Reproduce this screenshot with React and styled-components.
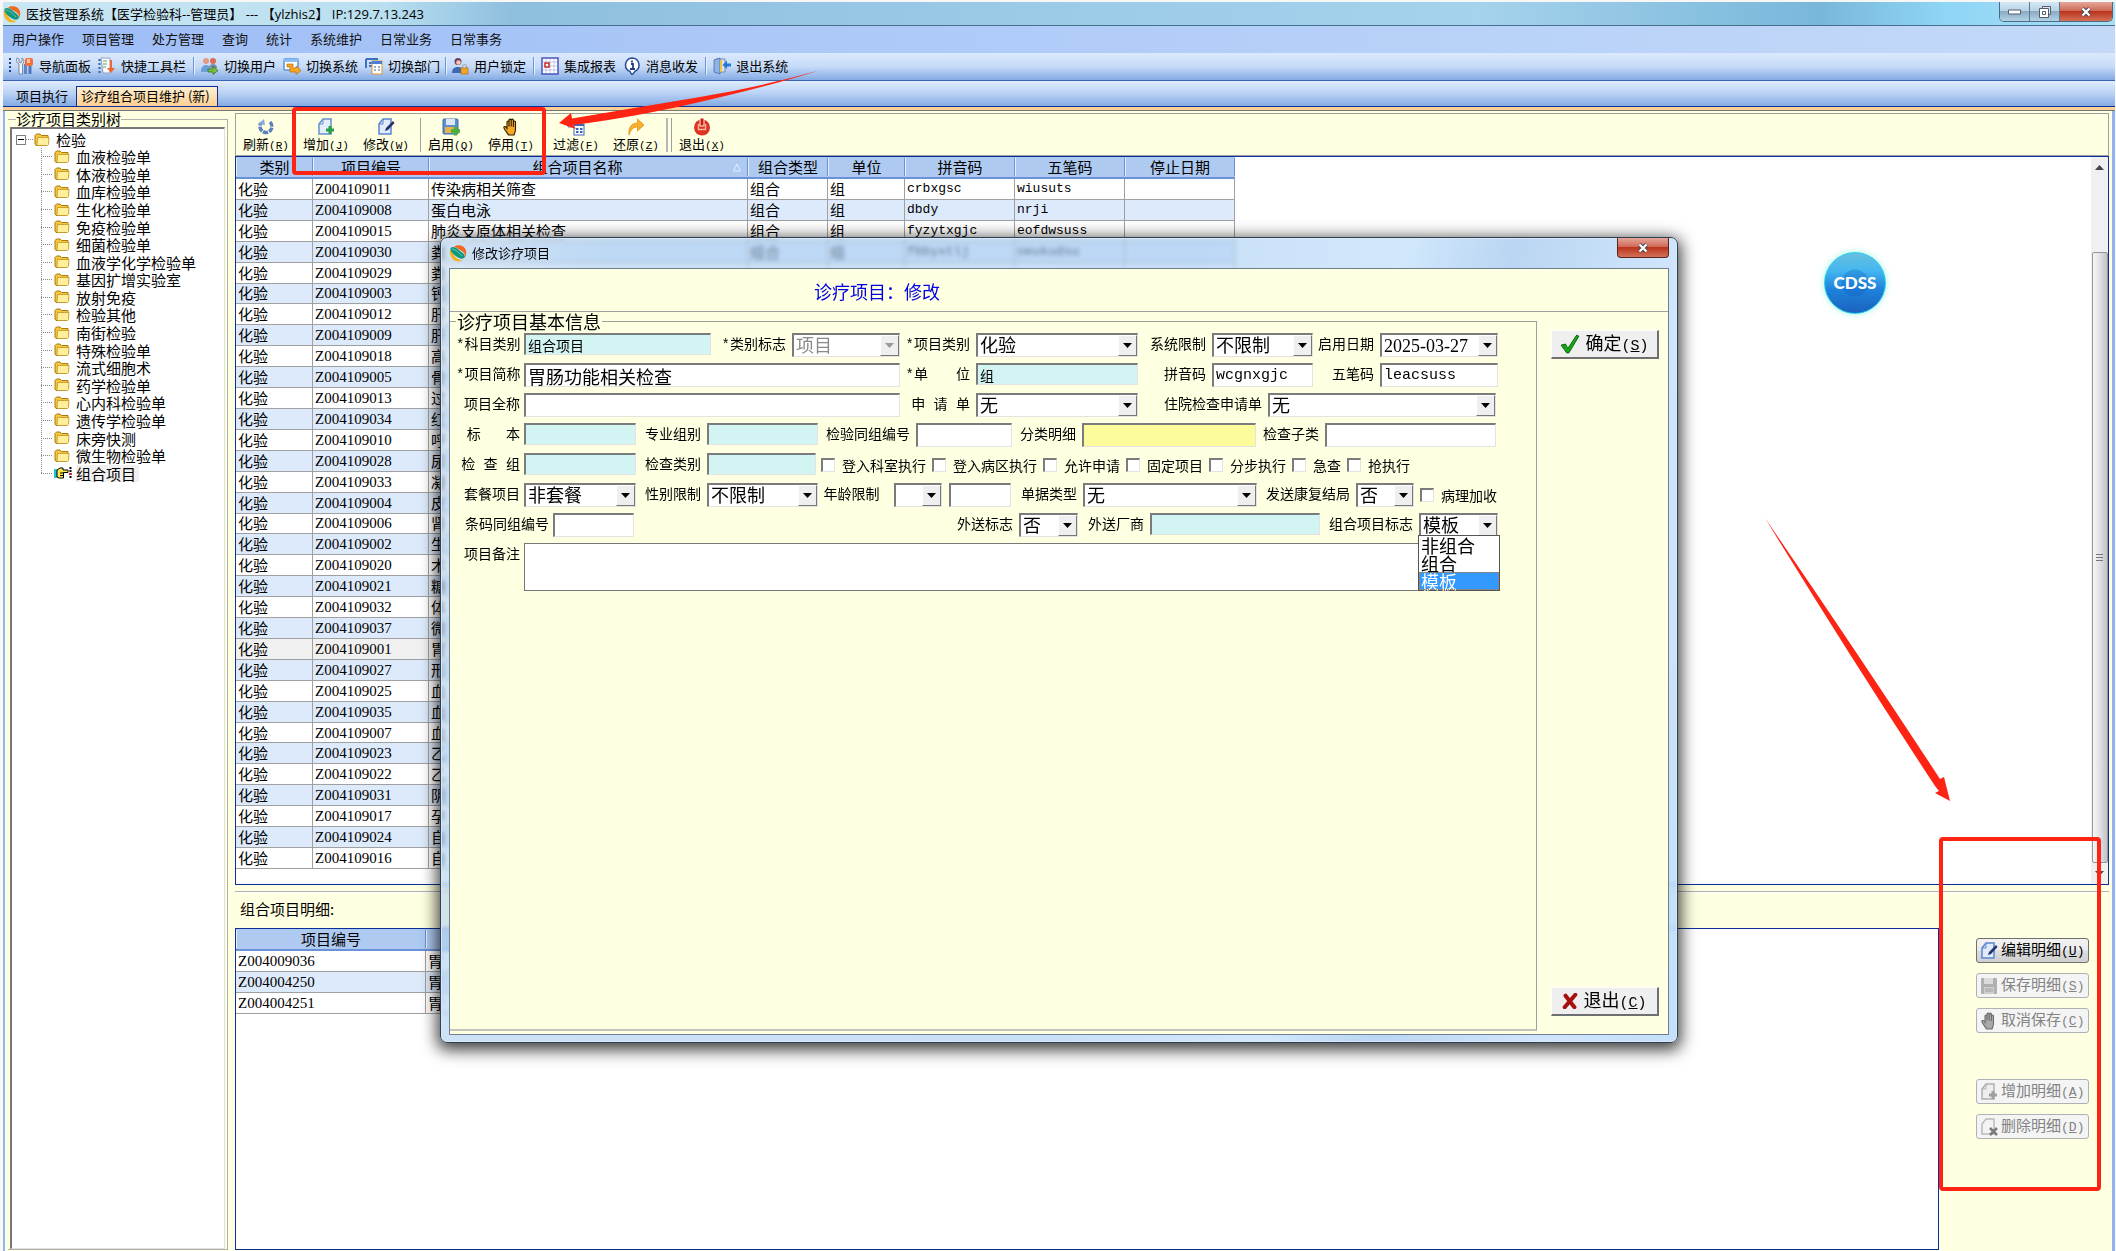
import React from 'react';
import styled, { createGlobalStyle, css } from 'styled-components';

const CJK = '"Noto Sans CJK SC", sans-serif';
const MONO = '"Liberation Mono", "Noto Sans CJK SC", monospace';
const SERIF = '"Liberation Serif", "Noto Sans CJK SC", serif';

const GlobalStyle = createGlobalStyle`
  :root {
    --cream: #ffffe1;
    --navy: #0a2f9b;
    --stripe: #ddeafb;
    --line: #a0a0a0;
    --red: #fe2414;
  }

  * {
    box-sizing: border-box;
  }

  body {
    margin: 0;
    background: #f7f7f7;
    color: #000;
    font: 13px/18px ${CJK};
  }

  button,
  input,
  select,
  textarea {
    font: inherit;
    color: inherit;
    margin: 0;
    border-radius: 0;
  }
`;

/* ---------- data ---------- */

const menus = [
  '用户操作',
  '项目管理',
  '处方管理',
  '查询',
  '统计',
  '系统维护',
  '日常业务',
  '日常事务',
];

const treeItems = [
  '血液检验单',
  '体液检验单',
  '血库检验单',
  '生化检验单',
  '免疫检验单',
  '细菌检验单',
  '血液学化学检验单',
  '基因扩增实验室',
  '放射免疫',
  '检验其他',
  '南街检验',
  '特殊检验单',
  '流式细胞术',
  '药学检验单',
  '心内科检验单',
  '遗传学检验单',
  '床旁快测',
  '微生物检验单',
  '组合项目',
];

const columns = [
  ['类别', 77],
  ['项目编号', 116],
  ['组合项目名称', 319],
  ['组合类型', 80],
  ['单位', 77],
  ['拼音码', 110],
  ['五笔码', 110],
  ['停止日期', 110],
];

const items = [
  ['Z004109011', '传染病相关筛查', 'crbxgsc', 'wiusuts'],
  ['Z004109008', '蛋白电泳', 'dbdy', 'nrji'],
  ['Z004109015', '肺炎支原体相关检查', 'fyzytxgjc', 'eofdwsuss'],
  ['Z004109030', '粪', 'fbbyxtlj', 'oeukudsu'],
  ['Z004109029', '粪'],
  ['Z004109003', '钙'],
  ['Z004109012', '肝'],
  ['Z004109009', '肝'],
  ['Z004109018', '高'],
  ['Z004109005', '骨'],
  ['Z004109013', '过'],
  ['Z004109034', '红'],
  ['Z004109010', '呼'],
  ['Z004109028', '尿'],
  ['Z004109033', '凝'],
  ['Z004109004', '皮'],
  ['Z004109006', '肾'],
  ['Z004109002', '生'],
  ['Z004109020', '术'],
  ['Z004109021', '糖'],
  ['Z004109032', '体'],
  ['Z004109037', '微'],
  ['Z004109001', '胃'],
  ['Z004109027', '形'],
  ['Z004109025', '血'],
  ['Z004109035', '血'],
  ['Z004109007', '血'],
  ['Z004109023', '乙'],
  ['Z004109022', '乙'],
  ['Z004109031', '阴'],
  ['Z004109017', '孕'],
  ['Z004109024', '自'],
  ['Z004109016', '自'],
];

const details = ['Z004009036', 'Z004004250', 'Z004004251'];

/* ---------- icons ---------- */

const Icon = ({ size = 18, children }) => (
  <svg width={size} height={size} viewBox="0 0 18 18" aria-hidden="true">
    {children}
  </svg>
);

const LogoIcon = () => (
  <Icon>
    <path d="M5 2.500C9 0 15.500 1 17 6.500c.6 2.600 0 5-1 6.500.3-3-1-5-4-6.500z" fill="#f26a21" />
    <path d="M1 5c-.8 4 .5 9 4.500 11.500 3 1.500 6 1 8-.5-4 0-6-1.500-8-4z" fill="#f7b21b" />
    <path d="M1.500 4C4 2 7 3.500 10 6s6 4 6 7c-2 3-6 1.500-8.500-.5S1 8 1.500 4z" fill="#12977c" />
    <path d="M3 5c2.500 0 8 4 10 7" stroke="#5fd0b4" fill="none" />
  </Icon>
);

const NavIcon = () => (
  <Icon>
    <path d="M1 1l2 1v3l2 1 1-2V1c2 1 2.500 4 .5 6v10H3V7C.5 6 0 3 1 1z" fill="#f2f5fa" stroke="#5c7496" strokeWidth=".8" />
    <path d="M12.500 9h3v8h-3z" fill="#5077b8" />
    <path d="M8 7h3v10H8z" fill="#5c86c9" />
    <rect x="9" y="1" width="8" height="8" rx="2" fill="#f4703a" />
    <path d="M11 2h3v4h-3z" fill="#ffc4a0" />
  </Icon>
);

const QuickIcon = () => (
  <Icon>
    <path d="M3 1h9v15H5z" fill="#f4f8ff" stroke="#8ca0bf" />
    <path d="M1.500 2v14" stroke="#3b5fa5" strokeWidth="2" strokeDasharray="2 2" />
    <path d="M5 4h4M5 7h4M5 10h3" stroke="#6aa84f" />
    <path d="M12 3h2v8h3l-4 5-4-5h3z" fill="#f2662b" />
  </Icon>
);

const SwitchUserIcon = () => (
  <Icon>
    <circle cx="5" cy="4" r="3" fill="#e59a86" />
    <path d="M0 15c0-5 2-7 5-7s4 2 4 4l-3 3z" fill="#6a9fd8" />
    <circle cx="12" cy="4" r="3" fill="#d96b5a" />
    <path d="M8 11c0-3 2-4 4-4s4 1 4 4z" fill="#7b8fb5" />
    <path d="M7 12h5V9l5 4.500-5 4V15H7z" fill="#7cc242" stroke="#2f6d1c" strokeWidth=".8" />
  </Icon>
);

const SwitchSystemIcon = () => (
  <Icon>
    <rect x="1" y="2" width="14" height="11" rx="1" fill="#fff" stroke="#5b93d8" strokeWidth="1.500" />
    <path d="M1 2h14v3H1z" fill="#8fbcf0" />
    <path d="M4 7h6v4h3V9l5 4.500-5 4V15H7v-5H4z" fill="#f5a623" stroke="#b86a10" strokeWidth=".7" />
  </Icon>
);

const SwitchDeptIcon = () => (
  <Icon>
    <path d="M1 2h12M1 2v9M4 6h4M4 9h3" stroke="#3f6fc4" strokeWidth="2" fill="none" />
    <rect x="7" y="4" width="10" height="13" fill="#fff" stroke="#d99a2e" />
    <path d="M7 4h10v3H7z" fill="#4c7fd1" />
    <path d="M9 10h2M13 10h2M9 13h2M13 13h2" stroke="#7a93bb" strokeWidth="1.500" />
  </Icon>
);

const LockIcon = () => (
  <Icon>
    <circle cx="7" cy="4.500" r="3.500" fill="#6b3f63" />
    <circle cx="7.500" cy="5.500" r="2.300" fill="#f3c9ae" />
    <path d="M1 16c0-4 2-6 6-6s5 2 5 6z" fill="#3d69b0" />
    <path d="M11.500 11V9.500a2 2 0 0 1 4 0V11" fill="none" stroke="#a8a8a8" strokeWidth="1.200" />
    <rect x="10" y="11" width="7" height="6" fill="#f3a52c" stroke="#b36d12" strokeWidth=".7" />
  </Icon>
);

const ReportIcon = () => (
  <Icon>
    <rect x="1" y="1" width="16" height="16" fill="#fff" stroke="#4a53b8" strokeWidth="1.500" />
    <path d="M5 2v14M9 2v14M13 2v14M2 5h14M2 9h14M2 13h14" stroke="#b6b9e3" strokeWidth=".8" />
    <rect x="4" y="6" width="4" height="4" fill="#fff" stroke="#c62828" strokeWidth="1.500" />
  </Icon>
);

const MessageIcon = () => (
  <Icon>
    <path d="M9 1a7 7 0 0 1 3 13.300L9 18l-2-3.500A7 7 0 0 1 9 1z" fill="#fff" stroke="#2c4d94" strokeWidth="1.500" />
    <path d="M8 7h2v5M7 12h5M9 3.500v2" stroke="#1f3f8f" strokeWidth="1.800" fill="none" />
  </Icon>
);

const ExitDoorIcon = () => (
  <Icon>
    <path d="M3 2h9v13H3z" fill="#d6e4f7" stroke="#6c87b3" />
    <path d="M1 3l6-2v16l-6-2z" fill="#8fb3e2" stroke="#4a6da8" strokeWidth=".8" />
    <path d="M7 3h2v12H7z" fill="#f0c040" />
    <path d="M18 6.500h-4v-3L9.500 8l4.500 4V9.500h4z" fill="#2478d4" />
  </Icon>
);

const RefreshIcon = () => (
  <Icon>
    <path d="M13 4a6 6 0 1 1-9 1" fill="none" stroke="#5d80bd" strokeWidth="3.500" strokeDasharray="5 1" />
    <path d="M1 6l6-5 1 6z" fill="#8caad8" />
  </Icon>
);

const pageShape = 'M6 1h8v15H2V6z';

const AddIcon = ({ dim }) => (
  <Icon>
    <path d={pageShape} fill={dim ? '#eee' : '#e3edfb'} stroke={dim ? '#b0b0b0' : '#6b90cf'} strokeWidth="1.500" />
    <path d="M6 1v5H2" fill="none" stroke={dim ? '#b0b0b0' : '#6b90cf'} />
    <path d="M9 12h8M13 8v8" stroke={dim ? '#a0a0a0' : '#23a04a'} strokeWidth="3" />
  </Icon>
);

const EditIcon = () => (
  <Icon>
    <path d={pageShape} fill="#dfeafb" stroke="#5b86cf" strokeWidth="1.500" />
    <path d="M6 1v5H2" fill="none" stroke="#5b86cf" />
    <path d="M8 13l1-3 7-7 1.500 2-6.500 7z" fill="#24306b" />
  </Icon>
);

const DeleteIcon = () => (
  <Icon>
    <path d={pageShape} fill="#f3f3f3" stroke="#bbb" strokeWidth="1.500" />
    <path d="M10 10l7 7M17 10l-7 7" stroke="#7b7b7b" strokeWidth="2.500" />
  </Icon>
);

const EnableIcon = () => (
  <Icon>
    <rect x="1" y="1" width="15" height="15" rx="1" fill="#5f8fd0" stroke="#3e6cab" />
    <path d="M4 1h9v6H4z" fill="#dbe8f8" />
    <path d="M3 9h11v6H3z" fill="#e7b24a" />
    <path d="M9 13h9M13.500 8.500v9" stroke="#4caf3a" strokeWidth="3.500" />
  </Icon>
);

const SaveIcon = () => (
  <Icon>
    <rect x="1" y="1" width="16" height="16" rx="1" fill="#b0b0b0" />
    <path d="M4 1h9v6H4z" fill="#dcdcdc" />
    <path d="M4 10h10v7H4z" fill="#cfcfcf" />
    <path d="M5 12h8M5 14h8" stroke="#a0a0a0" />
  </Icon>
);

const HandIcon = ({ dim }) => (
  <Icon>
    <path
      d="M5 10.500V4a1 1 0 0 1 2 0v4.500V2.200a1 1 0 0 1 2.200 0V8.500 2.200a1 1 0 0 1 2.200 0V9 4a1 1 0 0 1 2.100 0v7c0 3-1 4-1.500 6H6.500C5.500 15 3 12.500 2 10c-.5-1.500 1-2 2-.8z"
      fill={dim ? '#a8a8a8' : '#f9a825'}
      stroke={dim ? '#6c6c6c' : '#2b1a00'}
      strokeWidth="1.100"
    />
  </Icon>
);

const FilterIcon = () => (
  <Icon>
    <path d="M1 3h9v6H1z" fill="#cfe0f7" stroke="#5a7fb8" />
    <rect x="7" y="6" width="10" height="11" fill="#fff" stroke="#3e68b5" />
    <path d="M7 6h10v2H7z" fill="#3e68b5" />
    <path d="M9 11h2.500M13 11h2.500M9 14h2.500M13 14h2.500" stroke="#3e68b5" strokeWidth="2" />
  </Icon>
);

const RestoreIcon = () => (
  <Icon>
    <path d="M2 17C1 9 5 5 10.500 5V1L17 7l-6.500 6V9C7 9 4 11 2 17z" fill="#f8b02c" stroke="#dd8c12" strokeWidth=".7" />
  </Icon>
);

const PowerIcon = () => (
  <Icon>
    <circle cx="9" cy="9.500" r="8" fill="#dd3320" />
    <path d="M5.500 6v5.500h7V6" fill="none" stroke="#f7b3a5" strokeWidth="1.500" />
    <path d="M7 0h4v8H7z" fill="#c9200f" stroke="#fff0e8" strokeWidth="1" />
  </Icon>
);

const FolderIcon = () => (
  <svg width="16" height="14" viewBox="0 0 16 14" aria-hidden="true">
    <path d="M1 4V2.500L2.500 1H6l1.500 1.500H14V11l-1.500 1.500H2L1 11z" fill="#f7c640" stroke="#a87a10" />
    <path d="M3.500 4.500H15l-.5 7-1 1H3z" fill="#ffee9a" stroke="#c39522" strokeWidth=".8" />
  </svg>
);

const PointerIcon = () => (
  <svg width="18" height="14" viewBox="0 0 18 14" aria-hidden="true">
    <path d="M0 3h3v9H0z" fill="#19c5d6" />
    <path d="M3 4l3-2h3v2h5v2.500H9.500V12H5l-2-1z" fill="#ffe84a" stroke="#000" />
    <path d="M6 7h4M6 9.500h4" stroke="#000" />
    <path d="M16.500 1v12" stroke="#000" strokeWidth="2" strokeDasharray="2 1" />
    <path d="M15.500 7h2v2h-2z" fill="#f00" />
  </svg>
);

const CheckIcon = () => (
  <Icon size={20}>
    <path d="M1 10l4-1 2 4L15 1l2 1L8 17H6z" fill="#11a813" stroke="#0a5a0c" strokeWidth=".8" />
  </Icon>
);

const CrossIcon = () => (
  <Icon size={16}>
    <path d="M4 3l10 13M15 2L3 16" stroke="#a80f0f" strokeWidth="4.500" strokeLinecap="round" />
  </Icon>
);

const ArrowDown = ({ color = '#000' }) => (
  <svg width="9" height="5" viewBox="0 0 9 5" aria-hidden="true">
    <path d="M0 0h9L4.500 5z" fill={color} />
  </svg>
);

const ArrowUp = () => (
  <svg width="9" height="5" viewBox="0 0 9 5" aria-hidden="true">
    <path d="M0 5h9L4.500 0z" fill="#444" />
  </svg>
);

/* ---------- main window ---------- */

const Window = styled.div`
  position: relative;
  display: flex;
  flex-direction: column;
  min-height: 100vh;
  padding: 2px 1px 0 3px;
  overflow: hidden;
`;

const TitleBar = styled.header`
  display: flex;
  justify-content: space-between;
  height: 24px;
  border-bottom: 1px solid #47708f;
  background: linear-gradient(
    to right,
    #cbe6f2 0,
    #b9dff0 18%,
    #8fbfdf 24%,
    #9ccbe8 50%,
    #a5d2ec 70%,
    #79b7da 86%,
    #8fd5f5 92%,
    #a9e0f8 100%
  );
`;

const TitleText = styled.h1`
  display: flex;
  align-items: center;
  gap: 5px;
  margin: 0;
  font: 400 13px/22px "Open Sans", ${CJK};
  white-space: pre;
`;

const Controls = styled.div`
  display: flex;
  height: 20px;
  margin-right: 2px;
  border: 1px solid #4d6a80;
  border-top: 0;
  border-radius: 0 0 5px 5px;
  overflow: hidden;
`;

const ControlButton = styled.button`
  display: flex;
  align-items: center;
  justify-content: center;
  width: ${p => (p.$close ? 52 : 30)}px;
  padding: 0;
  border: 0;
  border-right: ${p => (p.$close ? 0 : '1px solid #5b7890')};
  background: ${p =>
    p.$close
      ? 'linear-gradient(#e5a79a, #cf6a58 45%, #bb3319 50%, #d4725a)'
      : 'linear-gradient(#d3e8f4, #b7d3e5 45%, #8caac2 50%, #b2d3e6)'};
`;

const MenuBar = styled.nav`
  display: flex;
  align-items: center;
  gap: 18px;
  height: 27px;
  padding: 0 9px 2px;
  background: linear-gradient(to right, #9ebdf6, #b4cff8 60%, #c4d9f8);
`;

const MenuLink = styled.a`
  color: #111;
  text-decoration: none;
`;

const ToolStrip = styled.div`
  display: flex;
  align-items: center;
  gap: 7px;
  height: 28px;
  padding: 0 6px 2px;
  border-bottom: 1px solid #3b62b3;
  background: linear-gradient(#dbe9fd, #c6dbf8 50%, #84abe4);
`;

const Grip = styled.i`
  width: 2px;
  height: 16px;
  margin-right: -2px;
  background: repeating-linear-gradient(#27418c 0 2px, transparent 2px 4px);
`;

const StripButton = styled.button`
  display: flex;
  align-items: center;
  gap: 5px;
  padding: 0;
  border: 0;
  background: none;
  white-space: nowrap;
`;

const StripLine = styled.i`
  width: 1px;
  height: 18px;
  margin: 0 ${p => (p.$tight ? -2 : 0)}px;
  background: #6f95d2;
  box-shadow: 1px 0 #e8f1fd;
`;

const Tabs = styled.div`
  display: flex;
  align-items: flex-end;
  height: 26px;
  padding: 0 2px;
  border-bottom: 1px solid var(--navy);
  background: linear-gradient(#dfecfd, #b9d1f4 50%, #84abe4);
`;

const Tab = styled.button`
  height: 20px;
  padding: ${p => (p.$active ? '0 7px 1px 4px' : '0 8px 1px 11px')};
  border: 0;
  background: none;
  white-space: nowrap;

  ${p =>
    p.$active &&
    css`
      border: 1px solid var(--navy);
      border-bottom: 0;
      background: linear-gradient(#fff0d0, #fdcf92);
    `}
`;

const TabEdge = styled.div`
  height: 4px;
  border-bottom: 1px solid #777;
  background: #fbcf95;
`;

const Body = styled.div`
  display: flex;
  flex: 1;
  gap: 7px;
  padding: 0 3px 1px 3px;
  border-left: 2px solid #8fb4ef;
  border-right: 3px solid #8fb4ef;
  background: var(--cream);
`;

/* ---------- category tree ---------- */

const TreeGroup = styled.fieldset`
  display: flex;
  flex-direction: column;
  width: 220px;
  min-width: 0;
  margin: 0;
  padding: 0 2px 0;
  border: 1px solid #b0b0b0;
  border-left: 0;
`;

const TreeLegend = styled.legend`
  margin-left: 6px;
  padding: 0;
  font-size: 15px;
  line-height: 16px;
`;

const TreeBox = styled.div`
  height: 100%;
  min-height: 1120px;
  padding: 2px 4px;
  border: 1px solid #e0e0e0;
  border-top: 2px solid #777;
  border-left: 2px solid #777;
  background: #fff;
  font-size: 15px;
  line-height: 17px;
`;

const TreeRoot = styled.div`
  display: flex;
  align-items: center;
  height: 17px;
`;

const Toggle = styled.button`
  display: flex;
  align-items: center;
  justify-content: center;
  width: 10px;
  height: 10px;
  padding: 0;
  border: 1px solid #808080;
  background: #fff;

  &::before {
    content: '';
    width: 6px;
    height: 1px;
    background: #000;
  }
`;

const Dots = styled.i`
  width: ${p => p.$w}px;
  height: 1px;
  margin-right: 1px;
  background: repeating-linear-gradient(to right, #888 0 1px, transparent 1px 2px);
`;

const RootText = styled.span`
  margin-left: 6px;
`;

const TreeList = styled.ul`
  display: flex;
  flex-direction: column;
  height: 334px;
  margin: 0 0 0 25px;
  padding: 0;
  list-style: none;
  background: repeating-linear-gradient(#888 0 1px, transparent 1px 2px) 0 0 / 1px 326px no-repeat;
`;

const TreeItem = styled.li`
  display: flex;
  flex: 1;
  align-items: center;
`;

const TreeText = styled.span`
  margin-left: ${p => (p.$active ? 4 : 6)}px;
  padding-right: 3px;
  background: ${p => (p.$active ? '#f0f0f0' : 'none')};
`;

/* ---------- work area ---------- */

const Work = styled.main`
  display: flex;
  flex: 1;
  flex-direction: column;
  min-width: 0;
  padding-top: 2px;
`;

const Actions = styled.div`
  display: flex;
  align-items: center;
  height: 43px;
  border: 1px solid var(--line);
  background: var(--cream);
`;

const Action = styled.button`
  display: flex;
  flex-direction: column;
  align-items: center;
  width: 60px;
  padding: 3px 0 0;
  border: 0;
  background: none;
  line-height: 15px;
  white-space: nowrap;
`;

const ActionLine = styled.i`
  width: ${p => (p.$double ? 6 : 5)}px;
  height: 34px;
  border-right: 1px solid var(--line);
  border-left: ${p => (p.$double ? '2px solid #b8b8b8' : 0)};
`;

const HotKey = styled.span`
  font-family: ${MONO};
  font-size: ${p => p.$size || 11}px;
`;

const GridFrame = styled.section`
  display: flex;
  justify-content: space-between;
  flex: ${p => (p.$grow ? 1 : 'none')};
  min-width: 0;
  padding-bottom: ${p => (p.$grow ? 0 : 15)}px;
  border: 1px solid var(--navy);
  background: #fff;
`;

const Grid = styled.table`
  width: ${p => p.$width}px;
  height: ${p => p.$height}px;
  table-layout: fixed;
  border-collapse: separate;
  border-spacing: 0;
  font-size: 15px;
  line-height: 18px;
  white-space: nowrap;

  th {
    position: relative;
    height: 22px;
    padding: 0;
    border-bottom: 2px solid #6a92d8;
    background:
      linear-gradient(#6a92d8, #6a92d8) 100% 50% / 1px 18px no-repeat,
      linear-gradient(#e6f0fd, #e6f0fd) 0 50% / 1px 18px no-repeat,
      #aecaf1;
    font-weight: 400;
  }

  td {
    padding: 0 2px;
    overflow: hidden;
    border-right: 1px solid var(--line);
    border-bottom: 1px solid var(--line);
  }

  tbody tr:nth-child(even) {
    background: var(--stripe);
  }

  tbody tr[aria-selected='true'] {
    background: #f0f0f0;
  }
`;

const HeadText = styled.span`
  padding-right: ${p => (p.$sorted ? 22 : 0)}px;
`;

const Code = styled.td`
  font-family: ${SERIF};
`;

const Pinyin = styled.td`
  font-family: ${MONO};
  font-size: 13px;
`;

const SortMark = styled.svg`
  position: absolute;
  right: 7px;
  top: 6px;
`;

const ScrollTrack = styled.div`
  display: flex;
  flex-direction: column;
  align-items: center;
  width: 17px;
  margin-bottom: -15px;
  padding: 8px 0;
  background: #f0f0f0;
`;

const ScrollThumb = styled.div`
  display: flex;
  align-items: center;
  justify-content: center;
  flex: 1;
  width: 16px;
  margin: 82px 0 8px;
  border: 1px solid #979797;
  border-radius: 2px;
  background: linear-gradient(to right, #f6f6f6, #e3e3e4 45%, #c3c4c8);

  &::before {
    content: '';
    width: 7px;
    height: 8px;
    background: repeating-linear-gradient(#777 0 1px, transparent 1px 3px);
  }
`;

const DetailTitle = styled.h2`
  height: 37px;
  margin: 6px 0 0;
  padding-left: 5px;
  border-top: 1px solid #b0b0b0;
  box-shadow: inset 0 1px #fff;
  font-size: 15px;
  font-weight: 400;
  line-height: 33px;
`;

const DetailRow = styled.div`
  display: flex;
  flex: 1;
`;

const DetailActions = styled.div`
  display: flex;
  flex-direction: column;
  align-items: flex-end;
  gap: 10px;
  width: 170px;
  padding: 10px 20px 0 0;
`;

const DetailButton = styled.button`
  display: flex;
  align-items: center;
  gap: 3px;
  width: 113px;
  height: 25px;
  margin-top: ${p => (p.$apart ? 36 : 0)}px;
  padding: 0 3px;
  border: 1px solid #707070;
  border-radius: 3px;
  background: linear-gradient(#f2f2f2, #ebebeb 48%, #dddddd 52%, #cfcfcf);
  font-size: 15px;
  white-space: nowrap;

  &:disabled {
    border-color: #adb2b5;
    background: #f4f4f4;
    color: #838383;
  }
`;

const Cdss = styled.button`
  position: absolute;
  top: 252px;
  right: 230px;
  width: 62px;
  height: 62px;
  padding: 0;
  border: 1px solid #22d3ea;
  border-radius: 50%;
  background:
    radial-gradient(circle, rgba(10, 90, 190, 0.3) 0 13px, transparent 14px),
    linear-gradient(#68bfe0, #43b6f0 30%, #1e83dc 60%, #1b62bd);
  box-shadow: 0 0 7px #a5f5e6;
  color: #fff;
  font: 900 17px/60px Lato, sans-serif;
`;

/* ---------- edit dialog ---------- */

const DialogLayer = styled.div`
  position: absolute;
  inset: 237px 0 auto;
  display: flex;
  justify-content: center;
  padding-left: 2px;
`;

const Dialog = styled.div`
  width: 1238px;
  padding: 0 8px 7px;
  border: 1px solid #2f3f4f;
  border-radius: 7px;
  background: linear-gradient(100deg, #c8dcef99, #a9cdf099 12%, #a4cbf299 55%, #b3d8fa99 70%, #9cc4ecb3 78%, #c5dffacc 90%, #b4d7f8cc);
  box-shadow: inset 0 0 0 1px #d8eafa, 0 4px 16px 3px rgba(0, 0, 0, 0.75);
  backdrop-filter: blur(2px);
`;

const DialogTitle = styled.div`
  display: flex;
  justify-content: space-between;
  height: 30px;
`;

const DialogClose = styled(ControlButton)`
  height: 20px;
  border: 1px solid #5b2320;
  border-top: 0;
  border-radius: 0 0 4px 4px;
`;

const DialogBody = styled.form`
  border: 1px solid #6d7f91;
  background: var(--cream);
`;

const DialogHeading = styled.h2`
  height: 43px;
  margin: 0;
  padding-left: 364px;
  border-bottom: 1px solid var(--line);
  color: #0000e6;
  font-size: 18px;
  font-weight: 400;
  line-height: 45px;
`;

const DialogColumns = styled.div`
  display: flex;
  min-height: 722px;
`;

const BaseInfo = styled.fieldset`
  display: flex;
  flex: 1;
  flex-direction: column;
  gap: 6px;
  min-width: 0;
  margin: 0 0 3px;
  padding: 3px 6px 0;
  border: 1px solid var(--line);
  border-left: 0;
  border-bottom: 2px solid #c4c4bc;
`;

const BaseLegend = styled.legend`
  padding: 0 1px;
  font-size: 18px;
  line-height: 18px;
`;

const FormRow = styled.div`
  display: flex;
  width: 1042px;
  min-height: 24px;
`;

const Caption = styled.span`
  flex: none;
  width: ${p => p.$w}px;
  padding-right: 6px;
  font: 14px/24px ${MONO};
  text-align: right;
  white-space: pre;
`;

const Field = styled.label`
  position: relative;
  display: flex;
  flex: none;
  align-items: flex-start;
  width: ${p => p.$w}px;
  margin-left: ${p => (p.$end ? 'auto' : 0)};

  &:first-child ${Caption} {
    padding-right: 4px;
  }
`;

const sunken = css`
  border: 1px solid;
  border-width: 2px 1px 1px 2px;
  border-color: #7b7b7b #e3e3e3 #e3e3e3 #7b7b7b;
`;

const tones = { cyan: '#d2f4f2', yellow: '#fcfc9c', white: '#fff' };

const TextBox = styled.input`
  ${sunken}
  flex: 1;
  min-width: 0;
  height: ${p => (p.$tone === 'cyan' ? 22 : 24)}px;
  padding: 0 2px;
  background: ${p => tones[p.$tone || 'white']};
  font: ${p => p.$size || 18}px/18px ${MONO};
`;

const Remark = styled.textarea`
  flex: 1;
  height: 48px;
  border: 1px solid #777;
  background: #fff;
  resize: none;
`;

const ComboBox = styled.span`
  ${sunken}
  display: flex;
  flex: 1;
  min-width: 0;
  height: 24px;
  background: #fff;
  color: ${p => (p.$disabled ? '#8a8a8a' : '#000')};

  select,
  input {
    flex: 1;
    min-width: 0;
    padding: 0 2px;
    border: 0;
    background: none;
    appearance: none;
    font: 18px/20px ${SERIF};
    opacity: 1;
  }
`;

const ComboArrow = styled.span`
  display: flex;
  align-items: center;
  justify-content: center;
  width: 19px;
  border: 1px solid;
  border-color: #fff #777 #777 #fff;
  background: #efefef;
`;

const OptionList = styled.ul`
  position: absolute;
  top: 22px;
  right: -2px;
  width: 82px;
  z-index: 1;
  margin: 0;
  padding: 0;
  border: 1px solid #555;
  background: #fff;
  list-style: none;
  font-size: 18px;
  line-height: 18px;
`;

const Option = styled.li`
  height: 18px;
  padding-left: 2px;
  outline: ${p => (p.$active ? '1px dotted #c87a2c' : 'none')};
  outline-offset: -1px;
  background: ${p => (p.$active ? '#3399ff' : 'none')};
  color: ${p => (p.$active ? '#fff' : '#000')};
`;

const CheckField = styled.label`
  display: flex;
  align-items: center;
  gap: 7px;
  margin-left: ${p => (p.$first ? 5 : 6)}px;
  font-size: 14px;

  input {
    ${sunken}
    width: 14px;
    height: 14px;
    background: #fff;
    appearance: none;
  }
`;

const Spacer = styled.i`
  width: 7px;
`;

const DialogSide = styled.div`
  display: flex;
  flex-direction: column;
  justify-content: space-between;
  padding: 18px 9px 18px 14px;
`;

const DialogButton = styled.button`
  display: flex;
  align-items: center;
  justify-content: center;
  gap: 5px;
  width: 108px;
  height: 29px;
  padding: 0;
  border: 1px solid;
  border-width: 1px 2px 2px 1px;
  border-color: #fff #6f6f6f #6f6f6f #fff;
  background: #efefef;
  font-size: 18px;
`;

/* ---------- red marks ---------- */

const MarkBox = styled.div`
  position: absolute;
  border: 4px solid var(--red);
  border-radius: 4px;
  pointer-events: none;
`;

const ToolbarMark = styled(MarkBox)`
  top: 107px;
  left: 292px;
  width: 254px;
  height: 68px;
`;

const DetailMark = styled(MarkBox)`
  top: 837px;
  right: 15px;
  width: 162px;
  height: 354px;
`;

const MarkArrow = styled.svg`
  position: absolute;
  top: ${p => p.$top}px;
  left: ${p => (p.$left ? `${p.$left}px` : 'auto')};
  right: ${p => (p.$right ? `${p.$right}px` : 'auto')};
  fill: var(--red);
  pointer-events: none;
`;

const Combo = ({ options, disabled }) => (
  <ComboBox $disabled={disabled}>
    <select disabled={disabled} defaultValue={options[0]}>
      {options.map(o => (
        <option key={o}>{o}</option>
      ))}
    </select>
    <ComboArrow>
      <ArrowDown color={disabled ? '#999' : '#000'} />
    </ComboArrow>
  </ComboBox>
);

const Check = ({ text, first }) => (
  <CheckField $first={first}>
    <input type="checkbox" />
    {text}
  </CheckField>
);

const Key = ({ k, size }) => (
  <HotKey $size={size}>
    (<u>{k}</u>)
  </HotKey>
);

const CloseGlyph = () => (
  <svg width="12" height="10" viewBox="0 0 12 10" aria-hidden="true">
    <path d="M2.500 1.500l7 7M9.500 1.500l-7 7" stroke="#444a5a" strokeWidth="4" />
    <path d="M2.500 1.500l7 7M9.500 1.500l-7 7" stroke="#fff" strokeWidth="2.200" />
  </svg>
);

function EditDialog() {
  return (
    <DialogLayer>
      <Dialog role="dialog" aria-label="修改诊疗项目">
        <DialogTitle>
          <TitleText as="div">
            <LogoIcon />
            修改诊疗项目
          </TitleText>
          <DialogClose type="button" $close aria-label="关闭">
            <CloseGlyph />
          </DialogClose>
        </DialogTitle>
        <DialogBody>
          <DialogHeading>诊疗项目：修改</DialogHeading>
          <DialogColumns>
            <BaseInfo>
              <BaseLegend>诊疗项目基本信息</BaseLegend>
              <FormRow>
                <Field $w={255}>
                  <Caption $w={68}>*科目类别</Caption>
                  <TextBox $tone="cyan" $size={14} defaultValue="组合项目" />
                </Field>
                <Field $w={189}>
                  <Caption $w={81}>*类别标志</Caption>
                  <Combo options={['项目']} disabled />
                </Field>
                <Field $w={238}>
                  <Caption $w={76}>*项目类别</Caption>
                  <Combo options={['化验']} />
                </Field>
                <Field $w={175}>
                  <Caption $w={74}>系统限制</Caption>
                  <Combo options={['不限制']} />
                </Field>
                <Field $w={185}>
                  <Caption $w={67}>启用日期</Caption>
                  <ComboBox>
                    <input defaultValue="2025-03-27" />
                    <ComboArrow>
                      <ArrowDown />
                    </ComboArrow>
                  </ComboBox>
                </Field>
              </FormRow>
              <FormRow>
                <Field $w={444}>
                  <Caption $w={68}>*项目简称</Caption>
                  <TextBox defaultValue="胃肠功能相关检查" />
                </Field>
                <Field $w={238}>
                  <Caption $w={76}>*单　　位</Caption>
                  <TextBox $tone="cyan" $size={14} defaultValue="组" />
                </Field>
                <Field $w={175}>
                  <Caption $w={74}>拼音码</Caption>
                  <TextBox $size={15} defaultValue="wcgnxgjc" />
                </Field>
                <Field $w={185}>
                  <Caption $w={67}>五笔码</Caption>
                  <TextBox $size={15} defaultValue="leacsuss" />
                </Field>
              </FormRow>
              <FormRow>
                <Field $w={444}>
                  <Caption $w={68}>项目全称</Caption>
                  <TextBox />
                </Field>
                <Field $w={238}>
                  <Caption $w={76}>申 请 单</Caption>
                  <Combo options={['无']} />
                </Field>
                <Field $w={358}>
                  <Caption $w={130}>住院检查申请单</Caption>
                  <Combo options={['无']} />
                </Field>
              </FormRow>
              <FormRow>
                <Field $w={180}>
                  <Caption $w={68}>标   本</Caption>
                  <TextBox $tone="cyan" />
                </Field>
                <Field $w={182}>
                  <Caption $w={71}>专业组别</Caption>
                  <TextBox $tone="cyan" />
                </Field>
                <Field $w={194}>
                  <Caption $w={98}>检验同组编号</Caption>
                  <TextBox />
                </Field>
                <Field $w={244}>
                  <Caption $w={70}>分类明细</Caption>
                  <TextBox $tone="yellow" />
                </Field>
                <Field $w={240}>
                  <Caption $w={69}>检查子类</Caption>
                  <TextBox />
                </Field>
              </FormRow>
              <FormRow>
                <Field $w={180}>
                  <Caption $w={68}>检 查 组</Caption>
                  <TextBox $tone="cyan" />
                </Field>
                <Field $w={180}>
                  <Caption $w={71}>检查类别</Caption>
                  <TextBox $tone="cyan" />
                </Field>
                <Check first text="登入科室执行" />
                <Check text="登入病区执行" />
                <Check text="允许申请" />
                <Check text="固定项目" />
                <Check text="分步执行" />
                <Check text="急查" />
                <Check text="抢执行" />
              </FormRow>
              <FormRow>
                <Field $w={180}>
                  <Caption $w={68}>套餐项目</Caption>
                  <Combo options={['非套餐']} />
                </Field>
                <Field $w={182}>
                  <Caption $w={71}>性别限制</Caption>
                  <Combo options={['不限制']} />
                </Field>
                <Field $w={124}>
                  <Caption $w={76}>年龄限制 </Caption>
                  <Combo options={['']} />
                </Field>
                <Spacer />
                <Field $w={62}>
                  <TextBox aria-label="年龄" />
                </Field>
                <Field $w={246}>
                  <Caption $w={72}>单据类型</Caption>
                  <Combo options={['无']} />
                </Field>
                <Field $w={157}>
                  <Caption $w={99}>发送康复结局</Caption>
                  <Combo options={['否']} />
                </Field>
                <Check text="病理加收" />
              </FormRow>
              <FormRow>
                <Field $w={178}>
                  <Caption $w={97}>条码同组编号</Caption>
                  <TextBox />
                </Field>
                <Field $w={123} $end>
                  <Caption $w={64}>外送标志</Caption>
                  <Combo options={['否']} />
                </Field>
                <Field $w={242}>
                  <Caption $w={72}>外送厂商</Caption>
                  <TextBox $tone="cyan" />
                </Field>
                <Field $w={178}>
                  <Caption $w={99}>组合项目标志</Caption>
                  <Combo options={['模板', '组合', '非组合']} />
                  <OptionList>
                    <Option>非组合</Option>
                    <Option>组合</Option>
                    <Option $active>模板</Option>
                  </OptionList>
                </Field>
              </FormRow>
              <FormRow>
                <Field $w={1042}>
                  <Caption $w={68}>项目备注</Caption>
                  <Remark />
                </Field>
              </FormRow>
            </BaseInfo>
            <DialogSide>
              <DialogButton type="button">
                <CheckIcon />
                <span>
                  确定
                  <Key k="S" size={15} />
                </span>
              </DialogButton>
              <DialogButton type="button">
                <CrossIcon />
                <span>
                  退出
                  <Key k="C" size={15} />
                </span>
              </DialogButton>
            </DialogSide>
          </DialogColumns>
        </DialogBody>
      </Dialog>
    </DialogLayer>
  );
}

function ItemGrid() {
  return (
    <GridFrame>
      <Grid $width={999} $height={712}>
        <colgroup>
          {columns.map(([name, width]) => (
            <col key={name} width={width} />
          ))}
        </colgroup>
        <thead>
          <tr>
            {columns.map(([name]) => {
              const sorted = name === '组合项目名称';
              return (
                <th key={name}>
                  <HeadText $sorted={sorted}>{name}</HeadText>
                  {sorted && (
                    <SortMark width="8" height="9" viewBox="0 0 8 9">
                      <path d="M4 1L7.500 8h-7z" fill="none" stroke="#e2edfc" />
                    </SortMark>
                  )}
                </th>
              );
            })}
          </tr>
        </thead>
        <tbody>
          {items.map(([code, name, py, wb]) => (
            <tr key={code} aria-selected={code === 'Z004109001'}>
              <td>化验</td>
              <Code>{code}</Code>
              <td>{name}</td>
              <td>{py && '组合'}</td>
              <td>{py && '组'}</td>
              <Pinyin>{py}</Pinyin>
              <Pinyin>{wb}</Pinyin>
              <td />
            </tr>
          ))}
        </tbody>
      </Grid>
      <ScrollTrack>
        <ArrowUp />
        <ScrollThumb />
        <ArrowDown color="#444" />
      </ScrollTrack>
    </GridFrame>
  );
}

function DetailGrid() {
  return (
    <GridFrame $grow>
      <Grid $width={800} $height={85}>
        <colgroup>
          <col width={190} />
          <col />
        </colgroup>
        <thead>
          <tr>
            <th>项目编号</th>
            <th />
          </tr>
        </thead>
        <tbody>
          {details.map(code => (
            <tr key={code}>
              <Code>{code}</Code>
              <td>胃</td>
            </tr>
          ))}
        </tbody>
      </Grid>
    </GridFrame>
  );
}

function CategoryTree() {
  return (
    <TreeGroup>
      <TreeLegend>诊疗项目类别树</TreeLegend>
      <TreeBox>
        <TreeRoot>
          <Toggle aria-label="折叠" />
          <Dots $w={7} />
          <FolderIcon />
          <RootText>检验</RootText>
        </TreeRoot>
        <TreeList>
          {treeItems.map(name => {
            const active = name === '组合项目';
            return (
              <TreeItem key={name}>
                <Dots $w={12} />
                {active ? <PointerIcon /> : <FolderIcon />}
                <TreeText $active={active}>{name}</TreeText>
              </TreeItem>
            );
          })}
        </TreeList>
      </TreeBox>
    </TreeGroup>
  );
}

const ActionItem = ({ icon, text, k }) => (
  <Action>
    {icon}
    <span>
      {text}
      <Key k={k} />
    </span>
  </Action>
);

const DetailAction = ({ icon, text, k, ...rest }) => (
  <DetailButton {...rest}>
    {icon}
    <span>
      {text}
      <Key k={k} size={13} />
    </span>
  </DetailButton>
);

const StripItem = ({ icon, text }) => (
  <StripButton>
    {icon}
    {text}
  </StripButton>
);

function App() {
  return (
    <Window>
      <GlobalStyle />
      <TitleBar>
        <TitleText>
          <LogoIcon />
          {'医技管理系统【医学检验科--管理员】 --- 【ylzhis2】 IP:129.7.13.243'}
        </TitleText>
        <Controls>
          <ControlButton aria-label="最小化">
            <svg width="13" height="6" viewBox="0 0 13 6">
              <path d="M.5 1h12v4H.5z" fill="#fff" stroke="#555c6b" />
            </svg>
          </ControlButton>
          <ControlButton aria-label="还原">
            <svg width="14" height="14" viewBox="0 0 14 14">
              <path d="M4.500 1.500h8v8h-8z" fill="#dfe8ef" stroke="#555c6b" />
              <path d="M1.500 3.500h9v9h-9z" fill="#fff" stroke="#555c6b" />
              <path d="M4.500 6.500h3v3h-3z" fill="#fff" stroke="#555c6b" />
            </svg>
          </ControlButton>
          <ControlButton $close aria-label="关闭">
            <CloseGlyph />
          </ControlButton>
        </Controls>
      </TitleBar>
      <MenuBar>
        {menus.map(m => (
          <MenuLink key={m} href="#menu">
            {m}
          </MenuLink>
        ))}
      </MenuBar>
      <ToolStrip>
        <Grip />
        <StripItem icon={<NavIcon />} text="导航面板" />
        <StripItem icon={<QuickIcon />} text="快捷工具栏" />
        <StripLine />
        <StripItem icon={<SwitchUserIcon />} text="切换用户" />
        <StripItem icon={<SwitchSystemIcon />} text="切换系统" />
        <StripItem icon={<SwitchDeptIcon />} text="切换部门" />
        <StripLine $tight />
        <StripItem icon={<LockIcon />} text="用户锁定" />
        <StripLine />
        <StripItem icon={<ReportIcon />} text="集成报表" />
        <StripItem icon={<MessageIcon />} text="消息收发" />
        <StripLine />
        <StripItem icon={<ExitDoorIcon />} text="退出系统" />
      </ToolStrip>
      <Tabs>
        <Tab>项目执行</Tab>
        <Tab $active>诊疗组合项目维护 (新)</Tab>
      </Tabs>
      <TabEdge />
      <Body>
        <CategoryTree />
        <Work>
          <Actions>
            <ActionItem icon={<RefreshIcon />} text="刷新" k="R" />
            <ActionItem icon={<AddIcon />} text="增加" k="J" />
            <ActionItem icon={<EditIcon />} text="修改" k="W" />
            <ActionLine />
            <ActionItem icon={<EnableIcon />} text="启用" k="Q" />
            <ActionItem icon={<HandIcon />} text="停用" k="T" />
            <ActionLine />
            <ActionItem icon={<FilterIcon />} text="过滤" k="F" />
            <ActionItem icon={<RestoreIcon />} text="还原" k="Z" />
            <ActionLine $double />
            <ActionItem icon={<PowerIcon />} text="退出" k="X" />
          </Actions>
          <ItemGrid />
          <DetailTitle>组合项目明细:</DetailTitle>
          <DetailRow>
            <DetailGrid />
            <DetailActions>
              <DetailAction icon={<EditIcon />} text="编辑明细" k="U" />
              <DetailAction disabled icon={<SaveIcon />} text="保存明细" k="S" />
              <DetailAction disabled icon={<HandIcon dim />} text="取消保存" k="C" />
              <DetailAction disabled $apart icon={<AddIcon dim />} text="增加明细" k="A" />
              <DetailAction disabled icon={<DeleteIcon />} text="删除明细" k="D" />
            </DetailActions>
          </DetailRow>
        </Work>
      </Body>
      <Cdss>CDSS</Cdss>
      <EditDialog />
      <ToolbarMark />
      <MarkArrow $top={68} $left={557} width="264" height="64" viewBox="557 68 264 64">
        <path d="M559 123l12-10 1 5.500Q640 107 700 97T819 70.500Q770 86 700 102T573 125l3 4z" />
      </MarkArrow>
      <MarkArrow $top={516} $right={163} width="190" height="288" viewBox="1764 516 190 288">
        <path d="M1766 518Q1860 655 1941 779l4-2 6 24-15-8 4-2-4-5Q1850 655 1766 518z" />
      </MarkArrow>
      <DetailMark />
    </Window>
  );
}

export default App;
